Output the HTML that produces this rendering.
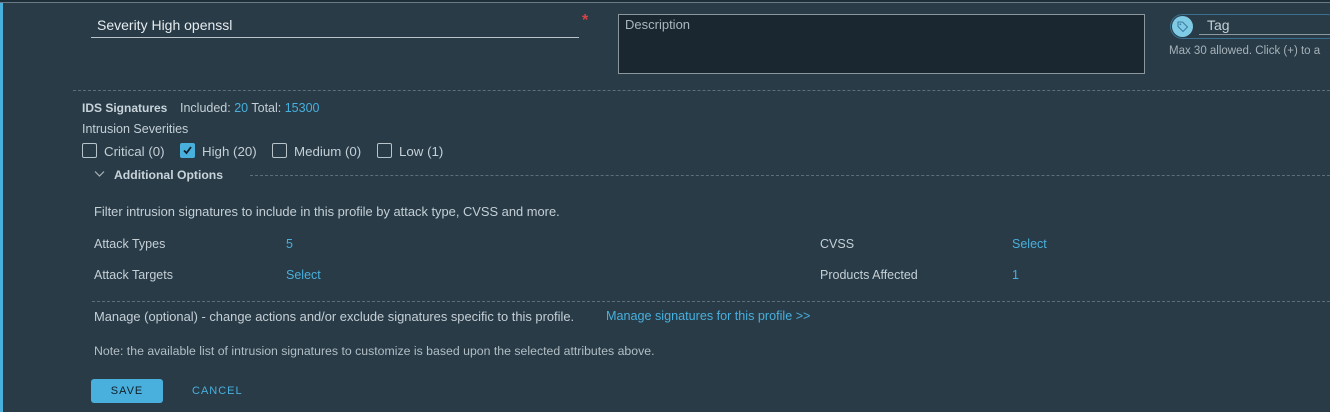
<!DOCTYPE html>
<html><head><meta charset="utf-8"><style>
*{margin:0;padding:0;box-sizing:border-box}
body{width:1330px;height:412px;background:#283b47;font-family:"Liberation Sans",sans-serif;color:#c5cfd6;overflow:hidden;position:relative;font-size:13px}
.a{position:absolute;white-space:nowrap}
.l{color:#49afdc}
.b{font-weight:bold;color:#c9d3da}
.cb{position:absolute;width:15px;height:15px;border:1px solid #b8c3ca;border-radius:2px}
.dash{position:absolute;border-top:1px dashed #5d6e79;height:0}
</style></head><body>
<div class="a" style="left:0;top:0;width:1330px;height:3px;background:#1e2e38;border-bottom:1px solid #6b7b86"></div>
<div class="a" style="left:0;top:3px;width:3px;height:409px;background:#49afdc"></div>

<div class="a" style="left:97px;top:17px;font-size:14px;color:#e6ecef">Severity High openssl</div>
<div class="a" style="left:91px;top:37px;width:488px;height:1px;background:#b9c3c9"></div>
<div class="a" style="left:582px;top:12px;color:#d64545;font-size:16px;font-weight:bold">*</div>

<div class="a" style="left:618px;top:14px;width:527px;height:60px;background:#1b2730;border:1px solid #8b979f"></div>
<div class="a" style="left:625px;top:17px;color:#aab5bc">Description</div>

<div class="a" style="left:1170px;top:14px;width:170px;height:25px;border:1px solid #3a6f8f;border-radius:13px"></div>
<div class="a" style="left:1172px;top:16px;width:21px;height:21px;border-radius:50%;background:#7fcbe6"></div>
<svg class="a" style="left:1176px;top:20px" width="13" height="13" viewBox="0 0 13 13"><path d="M2 2h4.5l5 5-4.5 4.5-5-5z" fill="none" stroke="#3d7da0" stroke-width="1.1"/><circle cx="4.3" cy="4.3" r="0.9" fill="#3d7da0"/></svg>
<div class="a" style="left:1207px;top:17px;font-size:14px;color:#c5cfd6">Tag</div>
<div class="a" style="left:1199px;top:34px;width:131px;height:1px;background:#8c979e"></div>
<div class="a" style="left:1169px;top:45px;font-size:11.5px;color:#a7b2b9">Max 30 allowed. Click (+) to a</div>

<div class="dash" style="left:73px;top:90px;width:1257px"></div>

<div class="a b" style="left:82px;top:101px;font-size:12px">IDS Signatures</div>
<div class="a" style="left:180px;top:101px;font-size:12.5px">Included: <span class="l">20</span> Total: <span class="l">15300</span></div>
<div class="a" style="left:82px;top:122px;font-size:12.5px">Intrusion Severities</div>

<div class="cb" style="left:82px;top:143px"></div>
<div class="a" style="left:104px;top:144px;font-size:13.3px">Critical (0)</div>
<div class="cb" style="left:180px;top:143px;background:#49afdc;border-color:#49afdc"></div>
<svg class="a" style="left:182px;top:145px" width="11" height="11" viewBox="0 0 11 11"><path d="M2 5.5l2.5 2.5 4.5-6" fill="none" stroke="#10202a" stroke-width="1.8"/></svg>
<div class="a" style="left:202px;top:144px;font-size:13.3px">High (20)</div>
<div class="cb" style="left:272px;top:143px"></div>
<div class="a" style="left:294px;top:144px;font-size:13.3px">Medium (0)</div>
<div class="cb" style="left:377px;top:143px"></div>
<div class="a" style="left:399px;top:144px;font-size:13.3px">Low (1)</div>

<svg class="a" style="left:94px;top:170px" width="11" height="8" viewBox="0 0 11 8"><path d="M1 1.5l4.5 4.5 4.5-4.5" fill="none" stroke="#a9b4bb" stroke-width="1.2"/></svg>
<div class="a b" style="left:114px;top:168px;font-size:12.2px">Additional Options</div>
<div class="dash" style="left:250px;top:175px;width:1080px"></div>

<div class="a" style="left:94px;top:204px;font-size:12.9px">Filter intrusion signatures to include in this profile by attack type, CVSS and more.</div>
<div class="a" style="left:94px;top:237px;font-size:12.5px">Attack Types</div>
<div class="a l" style="left:286px;top:237px;font-size:12.5px">5</div>
<div class="a" style="left:820px;top:237px;font-size:12.5px">CVSS</div>
<div class="a l" style="left:1012px;top:237px;font-size:12.5px">Select</div>
<div class="a" style="left:94px;top:268px;font-size:12.5px">Attack Targets</div>
<div class="a l" style="left:286px;top:268px;font-size:12.5px">Select</div>
<div class="a" style="left:820px;top:268px;font-size:12.5px">Products Affected</div>
<div class="a l" style="left:1012px;top:268px;font-size:12.5px">1</div>

<div class="dash" style="left:92px;top:301px;width:1238px"></div>
<div class="a" style="left:94px;top:309px;font-size:12.9px">Manage (optional) - change actions and/or exclude signatures specific to this profile.</div>
<div class="a l" style="left:606px;top:309px;font-size:12.6px">Manage signatures for this profile &gt;&gt;</div>
<div class="a" style="left:94px;top:344px;font-size:12.3px;color:#b3bec5">Note: the available list of intrusion signatures to customize is based upon the selected attributes above.</div>

<div class="a" style="left:91px;top:379px;width:72px;height:24px;background:#49afdc;border-radius:3px;color:#10202a;font-size:11px;letter-spacing:1px;text-align:center;line-height:24px">SAVE</div>
<div class="a l" style="left:192px;top:385px;font-size:11px;letter-spacing:1px">CANCEL</div>
</body></html>
